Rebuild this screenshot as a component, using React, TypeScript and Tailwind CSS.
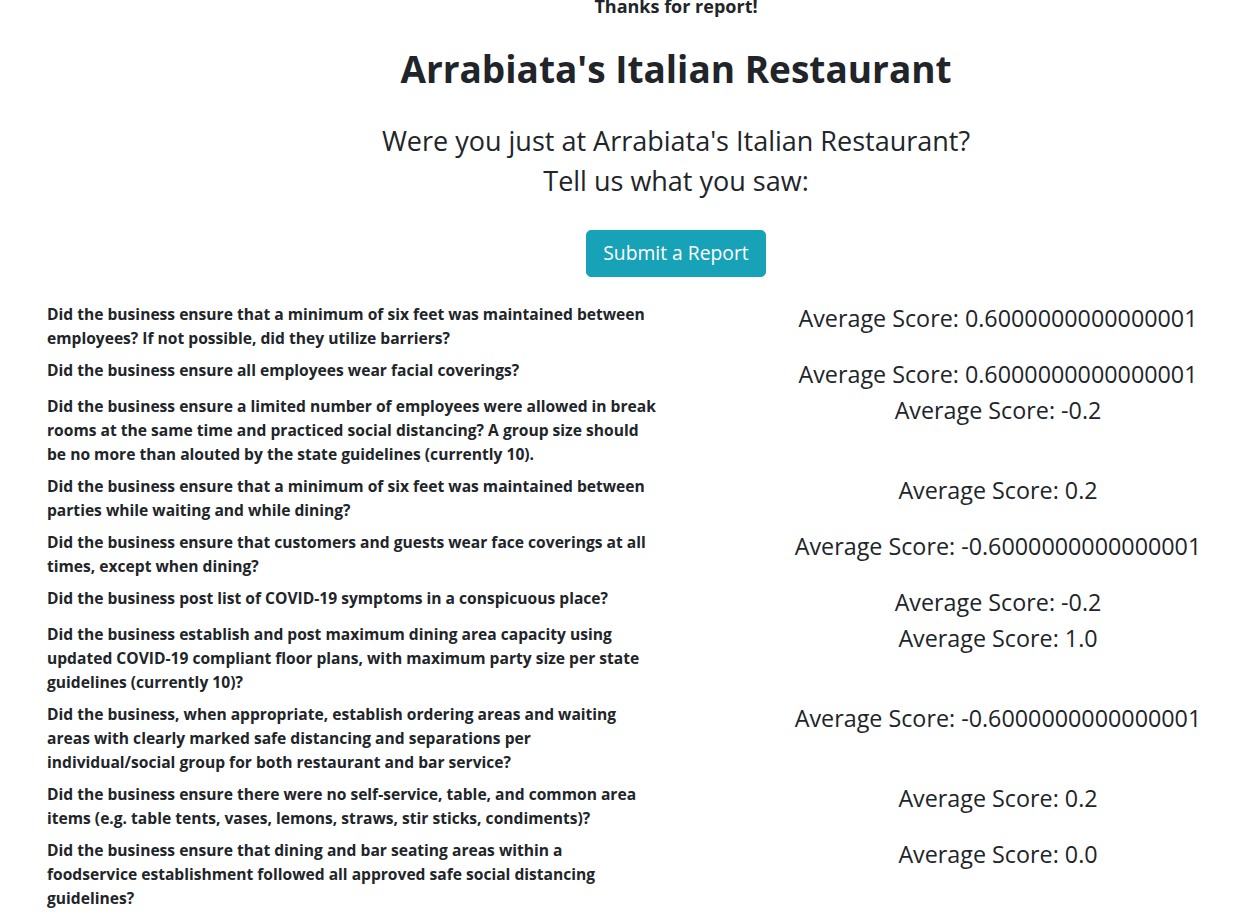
import { Fragment } from "react";

const questions: { q: string[]; score: string }[] = [
  {
    q: ["Did the business ensure that a minimum of six feet was maintained between employees? If not possible, did they utilize barriers?"],
    score: "0.6000000000000001",
  },
  { q: ["Did the business ensure all employees wear facial coverings?"], score: "0.6000000000000001" },
  {
    q: ["Did the business ensure a limited number of employees were allowed in break rooms at the same time and practiced social distancing? A group size should be no more than alouted by the state guidelines (currently 10)."],
    score: "-0.2",
  },
  {
    q: ["Did the business ensure that a minimum of six feet was maintained between parties while waiting and while dining?"],
    score: "0.2",
  },
  {
    q: ["Did the business ensure that customers and guests wear face coverings at all times, except when dining?"],
    score: "-0.6000000000000001",
  },
  { q: ["Did the business post list of COVID-19 symptoms in a conspicuous place?"], score: "-0.2" },
  {
    q: ["Did the business establish and post maximum dining area capacity using updated COVID-19 compliant floor plans, with maximum party size per state guidelines (currently 10)?"],
    score: "1.0",
  },
  {
    q: ["Did the business, when appropriate, establish ordering areas and waiting areas with clearly marked safe distancing and separations per individual/social group for both restaurant and bar service?"],
    score: "-0.6000000000000001",
  },
  {
    q: ["Did the business ensure there were no self-service, table, and common area items (e.g. table tents, vases, lemons, straws, stir sticks, condiments)?"],
    score: "0.2",
  },
  {
    q: [
      "Did the business ensure that dining and bar seating areas within a",
      "foodservice establishment followed all approved safe social distancing guidelines?",
    ],
    score: "0.0",
  },
];

export default function App() {
  return (
    <div className="h-[914px] w-full overflow-hidden bg-white font-['Open_Sans',sans-serif] text-[#212529]">
      <div className="-mt-[4px] ml-[32px] flex w-[1288px] flex-col">
        <h5 className="text-center text-[18px] font-bold leading-[1.2]">Thanks for report!</h5>

        <h1 className="mt-[29px] text-center text-[37px] font-bold leading-[1.2]">
          Arrabiata's Italian Restaurant
        </h1>

        <h3 className="mt-[34px] text-center text-[27px] font-medium leading-[1.2]">
          Were you just at Arrabiata's Italian Restaurant?
        </h3>
        <h3 className="mt-2 text-center text-[27px] font-medium leading-[1.2]">Tell us what you saw:</h3>

        <div className="mt-[32px] flex justify-center">
          <button className="rounded-[5px] border border-[#17a2b8] bg-[#17a2b8] px-4 py-2 text-[19.3px] leading-[1.5] text-white">
            Submit a Report
          </button>
        </div>

        <div className="mt-[25px]">
          {questions.map((item, i) => (
            <div key={i} className="flex">
              <div className="w-1/2 px-[15px]">
                <p className="mb-2 text-[15.6px] font-bold leading-6">
                  {item.q.map((line, j) => (
                    <Fragment key={j}>
                      {j > 0 && <br />}
                      {line}
                    </Fragment>
                  ))}
                </p>
              </div>
              <div className="w-1/2 px-[15px] text-center">
                <h4 className="mb-[5px] pt-[3px] text-[23.3px] font-medium leading-[1.2]">
                  Average Score: {item.score}
                </h4>
              </div>
            </div>
          ))}
        </div>
      </div>
    </div>
  );
}
